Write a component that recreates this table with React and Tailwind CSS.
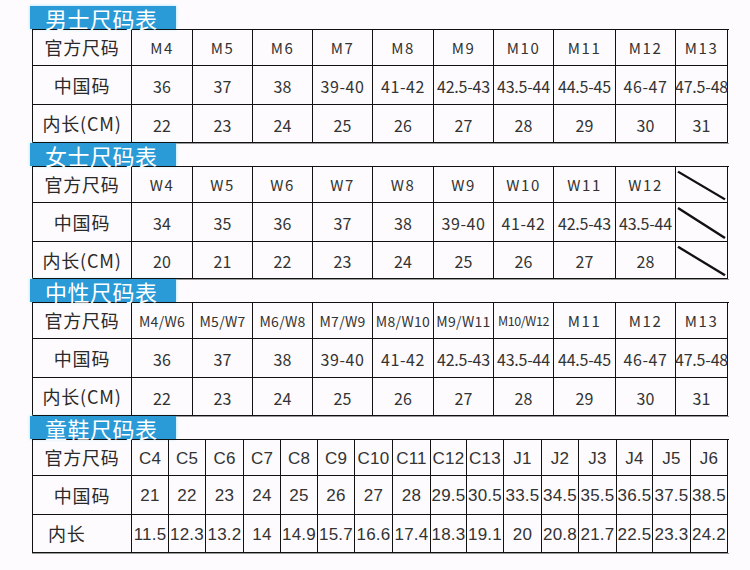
import React from 'react'

const cjk = { fontFamily: '"Noto Sans CJK SC", "Noto Sans", sans-serif' }
const latin = { fontFamily: '"Liberation Sans", "Noto Sans CJK SC", sans-serif' }

const menWomenCols = 'grid-cols-[99px_61px_60px_60px_60px_61px_60px_60px_62px_60px_52px]'
const kidsCols = 'grid-cols-[99px_37px_37px_38px_37px_37px_37px_38px_38px_36px_37px_38px_37px_38px_36px_38px_37px]'

const menChina = ['36', '37', '38', '39-40', '41-42', '42.5-43', '43.5-44', '44.5-45', '46-47', '47.5-48']
const menLen = ['22', '23', '24', '25', '26', '27', '28', '29', '30', '31']

const tables = [
  {
    title: '男士尺码表',
    cols: menWomenCols,
    rowsClass: 'grid-rows-[36px_39px_38px]',
    rows: [
      ['官方尺码', ['M4', 'M5', 'M6', 'M7', 'M8', 'M9', 'M10', 'M11', 'M12', 'M13']],
      ['中国码', menChina],
      ['内长(CM)', menLen],
    ],
  },
  {
    title: '女士尺码表',
    cols: menWomenCols,
    rowsClass: 'grid-rows-[36px_39px_37px]',
    rows: [
      ['官方尺码', ['W4', 'W5', 'W6', 'W7', 'W8', 'W9', 'W10', 'W11', 'W12', null]],
      ['中国码', ['34', '35', '36', '37', '38', '39-40', '41-42', '42.5-43', '43.5-44', null]],
      ['内长(CM)', ['20', '21', '22', '23', '24', '25', '26', '27', '28', null]],
    ],
  },
  {
    title: '中性尺码表',
    cols: menWomenCols,
    rowsClass: 'grid-rows-[36px_39px_38px]',
    rows: [
      ['官方尺码', ['M4/W6', 'M5/W7', 'M6/W8', 'M7/W9', 'M8/W10', 'M9/W11', 'M10/W12', 'M11', 'M12', 'M13']],
      ['中国码', menChina],
      ['内长(CM)', menLen],
    ],
  },
  {
    title: '童鞋尺码表',
    cols: kidsCols,
    rowsClass: 'grid-rows-[36px_39px_38px]',
    kids: true,
    rows: [
      ['官方尺码', ['C4', 'C5', 'C6', 'C7', 'C8', 'C9', 'C10', 'C11', 'C12', 'C13', 'J1', 'J2', 'J3', 'J4', 'J5', 'J6']],
      ['中国码', ['21', '22', '23', '24', '25', '26', '27', '28', '29.5', '30.5', '33.5', '34.5', '35.5', '36.5', '37.5', '38.5']],
      ['内长', ['11.5', '12.3', '13.2', '14', '14.9', '15.7', '16.6', '17.4', '18.3', '19.1', '20', '20.8', '21.7', '22.5', '23.3', '24.2']],
    ],
  },
]

// diagonal stroke for the empty women's cells
function Slash() {
  return (
    <svg className="w-full h-full" viewBox="0 0 51 37" preserveAspectRatio="none">
      <line x1="2" y1="3" x2="49" y2="34" stroke="#111" strokeWidth="2.4" />
    </svg>
  )
}

function cellText(value, rowIdx, kids) {
  if (kids) return 'text-[17px] tracking-[0.2px]'
  if (rowIdx === 0) {
    if (value.length >= 7) return 'text-[12.5px] tracking-[-0.4px]'
    if (value.includes('/')) return 'text-[14px] tracking-[0.3px]'
    return 'text-[15px] tracking-[1.6px]'
  }
  if (value.includes('.')) return 'text-[16px] tracking-[-0.2px]'
  if (value.includes('-')) return 'text-[16px] tracking-[0.6px]'
  return 'text-[16px]'
}

function SizeTable({ table }) {
  return (
    <div>
      <div className="-ml-[2px] h-[23px] w-[146px] bg-[#2a9bd7] shadow-[0_0_3px_#9ee6ff] flex items-center pl-[15px]">
        <span className="text-white text-[22px] leading-none tracking-[0.5px]" style={cjk}>
          {table.title}
        </span>
      </div>
      <div
        className={`grid ${table.cols} ${table.rowsClass} w-[697px] border-l border-t border-[#111] shadow-[0_1px_0_#9a9a9a]`}
      >
        {table.rows.map(([label, values], r) => (
          <React.Fragment key={label}>
            <div
              className={`flex items-center border-r border-b border-[#111] text-[18px] text-[#2a2a2a] tracking-[0.8px] ${
                table.kids && r === 2 ? 'justify-start pl-[15px]' : 'justify-center'
              }`}
              style={cjk}
            >
              {label}
            </div>
            {values.map((v, i) => (
              <div
                key={i}
                className="flex items-center justify-center border-r border-b border-[#111] text-[#333] whitespace-nowrap overflow-visible pt-[2px]"
              >
                {v === null ? (
                  <Slash />
                ) : (
                  <span className={cellText(v, r, table.kids)} style={table.kids ? latin : cjk}>
                    {v}
                  </span>
                )}
              </div>
            ))}
          </React.Fragment>
        ))}
      </div>
    </div>
  )
}

export default function App() {
  return (
    <div className="w-[750px] h-[570px] bg-[#fdfbfd] pt-[6px] pl-[32px] overflow-hidden">
      {tables.map((t) => (
        <SizeTable key={t.title} table={t} />
      ))}
    </div>
  )
}
